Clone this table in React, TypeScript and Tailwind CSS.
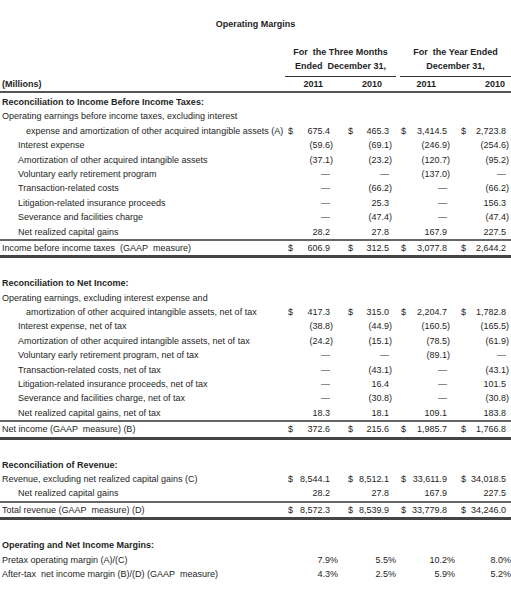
import React from "react";

type Row = {
  label: string;
  indent?: 0 | 1 | 2;
  vals?: string[];
  dollar?: boolean;
  line?: "thin" | "thick";
  pct?: boolean;
};

type Section = { title: string; rows: Row[] };

const sections: Section[] = [
  {
    title: "Reconciliation to Income Before Income Taxes:",
    rows: [
      { label: "Operating earnings before income taxes, excluding interest" },
      {
        label: "expense and amortization of other acquired intangible assets (A)",
        indent: 2,
        vals: ["675.4", "465.3", "3,414.5", "2,723.8"],
        dollar: true,
      },
      { label: "Interest expense", indent: 1, vals: ["(59.6)", "(69.1)", "(246.9)", "(254.6)"] },
      { label: "Amortization of other acquired intangible assets", indent: 1, vals: ["(37.1)", "(23.2)", "(120.7)", "(95.2)"] },
      { label: "Voluntary early retirement program", indent: 1, vals: ["—", "—", "(137.0)", "—"] },
      { label: "Transaction-related costs", indent: 1, vals: ["—", "(66.2)", "—", "(66.2)"] },
      { label: "Litigation-related insurance proceeds", indent: 1, vals: ["—", "25.3", "—", "156.3"] },
      { label: "Severance and facilities charge", indent: 1, vals: ["—", "(47.4)", "—", "(47.4)"] },
      { label: "Net realized capital gains", indent: 1, vals: ["28.2", "27.8", "167.9", "227.5"], line: "thin" },
      {
        label: "Income before income taxes  (GAAP  measure)",
        vals: ["606.9", "312.5", "3,077.8", "2,644.2"],
        dollar: true,
        line: "thick",
      },
    ],
  },
  {
    title: "Reconciliation to Net Income:",
    rows: [
      { label: "Operating earnings, excluding interest expense and" },
      {
        label: "amortization of other acquired intangible assets, net of tax",
        indent: 2,
        vals: ["417.3", "315.0", "2,204.7", "1,782.8"],
        dollar: true,
      },
      { label: "Interest expense, net of tax", indent: 1, vals: ["(38.8)", "(44.9)", "(160.5)", "(165.5)"] },
      { label: "Amortization of other acquired intangible assets, net of tax", indent: 1, vals: ["(24.2)", "(15.1)", "(78.5)", "(61.9)"] },
      { label: "Voluntary early retirement program, net of tax", indent: 1, vals: ["—", "—", "(89.1)", "—"] },
      { label: "Transaction-related costs, net of tax", indent: 1, vals: ["—", "(43.1)", "—", "(43.1)"] },
      { label: "Litigation-related insurance proceeds, net of tax", indent: 1, vals: ["—", "16.4", "—", "101.5"] },
      { label: "Severance and facilities charge, net of tax", indent: 1, vals: ["—", "(30.8)", "—", "(30.8)"] },
      { label: "Net realized capital gains, net of tax", indent: 1, vals: ["18.3", "18.1", "109.1", "183.8"], line: "thin" },
      {
        label: "Net income (GAAP  measure) (B)",
        vals: ["372.6", "215.6", "1,985.7", "1,766.8"],
        dollar: true,
        line: "thick",
      },
    ],
  },
  {
    title: "Reconciliation of Revenue:",
    rows: [
      {
        label: "Revenue, excluding net realized capital gains (C)",
        vals: ["8,544.1", "8,512.1", "33,611.9", "34,018.5"],
        dollar: true,
      },
      { label: "Net realized capital gains", indent: 1, vals: ["28.2", "27.8", "167.9", "227.5"], line: "thin" },
      {
        label: "Total revenue (GAAP  measure) (D)",
        vals: ["8,572.3", "8,539.9", "33,779.8", "34,246.0"],
        dollar: true,
        line: "thick",
      },
    ],
  },
  {
    title: "Operating and Net Income Margins:",
    rows: [
      { label: "Pretax operating margin (A)/(C)", vals: ["7.9%", "5.5%", "10.2%", "8.0%"], pct: true },
      {
        label: "After-tax  net income margin (B)/(D) (GAAP  measure)",
        vals: ["4.3%", "2.5%", "5.9%", "5.2%"],
        pct: true,
      },
    ],
  },
];

const GRID = "grid grid-cols-[284px_55px_57px_59px_56px]";
const colPad = ["pl-[4px] pr-[6px]", "pl-[9px] pr-[4px]", "pl-[5px] pr-[5px]", "pl-[6px] pr-[2px]"];
const pctPad = ["pr-[1px]", "pr-[0px]", "pr-[0px]", "pr-[0px]"];
const indentCls = ["pl-[2px]", "pl-[18px]", "pl-[26px]"];

function Num({ v }: { v: string }) {
  const paren = v.endsWith(")");
  return (
    <span className="whitespace-pre">
      {v}
      {!paren && <span className="invisible">)</span>}
    </span>
  );
}

function DataRow({ r }: { r: Row }) {
  const line =
    r.line === "thin"
      ? "border-b-2 border-[#666]"
      : r.line === "thick"
      ? "border-b-[3px] border-[#444]"
      : "";
  return (
    <div className={`${GRID} h-[14.4px] leading-[14.4px] ${line} box-content`}>
      <div className={`${indentCls[r.indent ?? 0]} whitespace-pre`}>{r.label}</div>
      {r.vals
        ? r.vals.map((v, i) =>
            r.pct ? (
              <div key={i} className={`text-right ${pctPad[i]} whitespace-pre`}>
                {v}
              </div>
            ) : (
              <div key={i} className={`flex justify-between ${colPad[i]}`}>
                <span>{r.dollar ? "$" : ""}</span>
                <Num v={v} />
              </div>
            )
          )
        : null}
    </div>
  );
}

export default function App() {
  return (
    <div className="w-[511px] h-[593px] bg-white overflow-hidden text-[#1e1e1e] text-[9px] font-['Liberation_Sans',Arial,sans-serif]">
      <div className="pt-[17px] h-[15px] box-content leading-[15px] text-center font-bold">Operating Margins</div>
      <div className={`${GRID} mt-[13px] font-bold`}>
        <div />
        <div className="col-span-2 ml-[1px] border-b border-[#333] text-center leading-[14px] pb-[3px]">
          <div className="whitespace-pre">For  the Three Months</div>
          <div className="whitespace-pre">Ended  December 31,</div>
        </div>
        <div className="col-span-2 ml-[4px] border-b border-[#333] text-center leading-[14px] pb-[3px]">
          <div className="whitespace-pre">For  the Year Ended</div>
          <div className="whitespace-pre">December 31,</div>
        </div>
      </div>
      <div className={`${GRID} h-[14px] leading-[14px] font-bold border-b-2 border-[#555] box-content`}>
        <div className="pl-[2px]">(Millions)</div>
        <div className="text-right pr-[16px]">2011</div>
        <div className="text-right pr-[14px]">2010</div>
        <div className="text-right pr-[19px]">2011</div>
        <div className="text-right pr-[6px]">2010</div>
      </div>
      {sections.map((s, si) => (
        <div key={si} className={si === 0 ? "mt-[2px]" : "mt-[18px]"}>
          <div className="h-[14.4px] leading-[14.4px] pl-[2px] font-bold">{s.title}</div>
          {s.rows.map((r, ri) => (
            <DataRow key={ri} r={r} />
          ))}
        </div>
      ))}
    </div>
  );
}
